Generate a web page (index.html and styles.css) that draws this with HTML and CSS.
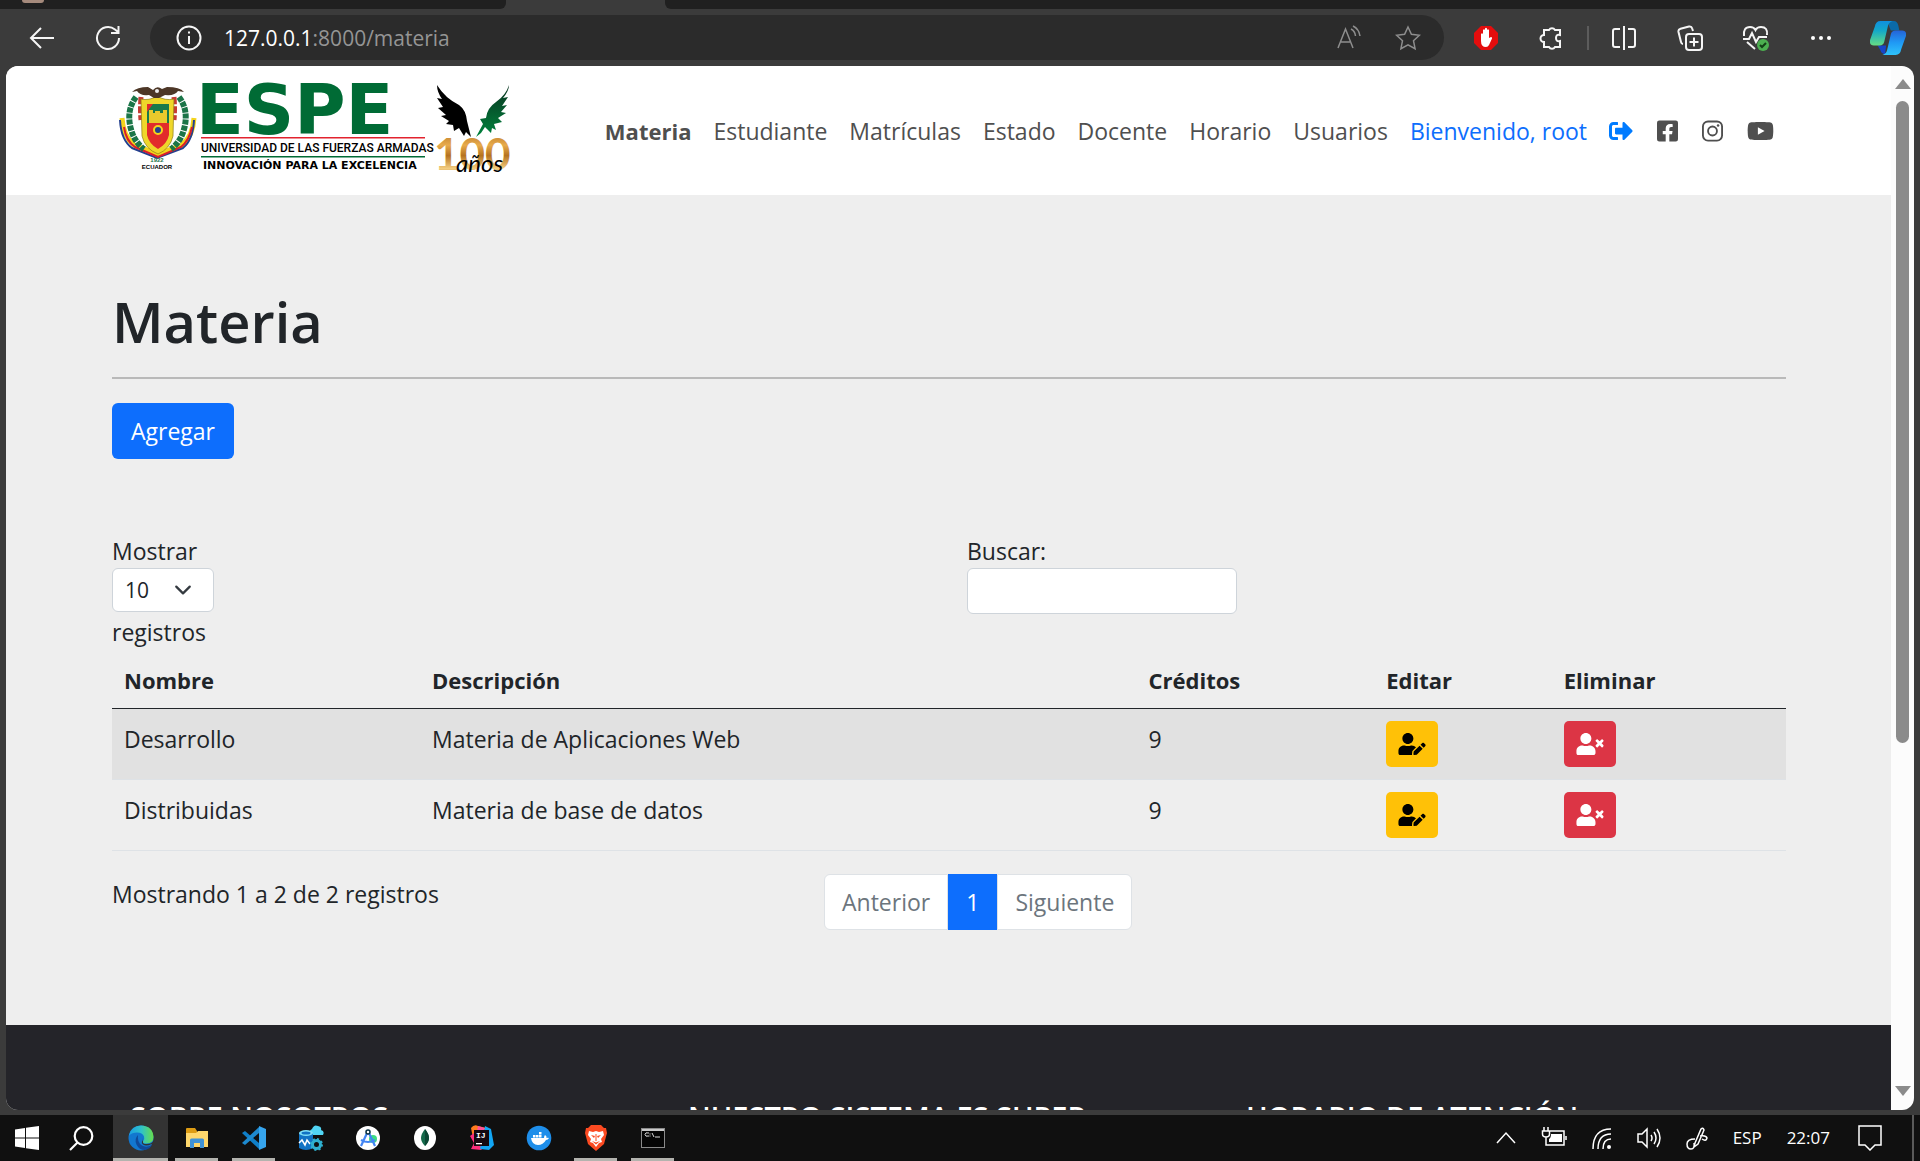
FILE: index.html
```html
<!DOCTYPE html>
<html lang="es">
<head>
<meta charset="utf-8">
<title>Materia</title>
<link rel="stylesheet" href="styles.css">
</head>
<body>
<div class="tabs">
  <div class="tab-group tab-group-left"><span class="avatar"></span></div>
  <div class="tab-active"></div>
  <div class="tab-group tab-group-right"></div>
</div>

<div class="toolbar">
  <button class="tool" aria-label="Atrás"><svg width="26" height="26" viewBox="0 0 26 26"><path d="M25 13H2M12 3 2 13l10 10"/></svg></button>
  <button class="tool" aria-label="Actualizar"><svg width="26" height="26" viewBox="0 0 26 26"><path d="M24 13a11 11 0 1 1-4-8.500l3 2.500M23.500 1v7H16"/></svg></button>
  <div class="address">
    <svg class="line" width="26" height="26" viewBox="0 0 26 26"><circle cx="13" cy="13" r="11.500"/><path d="M13 11v8M13 6.500v2"/></svg>
    <span class="url"><span class="host">127.0.0.1</span>:8000/materia</span>
    <button class="tool dim" aria-label="Leer en voz alta"><svg width="26" height="26" viewBox="0 0 26 26"><path d="M2 23 9.500 4 17 23M5 17h9M15 4q4 2 4.500 7M17 1q6 3 7 10"/></svg></button>
    <button class="tool dim" aria-label="Favoritos"><svg width="26" height="26" viewBox="0 0 26 26"><path d="m13 2 3.400 7.300 8 1-5.900 5.500 1.600 7.900L13 19.800l-7.100 3.900 1.600-7.900-5.900-5.500 8-1z"/></svg></button>
  </div>
  <button class="tool" aria-label="Bloqueador"><svg width="26" height="26" viewBox="0 0 26 26"><path class="solid" fill="#e40d0d" d="M8 1h10l7 7v10l-7 7H8l-7-7V8z"/><path class="solid" fill="#fff" d="M8 9q1-1.500 2 0V5q1-1.500 2 0V3.500q1-1.500 2 0V5q1-1.500 2 0v8l2-1q1.500 0 1 1.500L16 20q-1 2-3 2-5 0-5-6z"/></svg></button>
  <button class="tool" aria-label="Extensiones"><svg width="26" height="26" viewBox="0 0 26 26"><path d="M5 5h5a3.500 3.500 0 0 1 6 0h5v5q-4-1-4 3t4 3v6h-5a3.500 3.500 0 0 1-6 0H5v-5a3.500 3.500 0 0 1 0-7z"/></svg></button>
  <span class="divider"></span>
  <button class="tool" aria-label="Pantalla dividida"><svg width="26" height="26" viewBox="0 0 26 26"><path d="M9 4H4Q2 4 2 6v14q0 2 2 2h5M17 4h5q2 0 2 2v14q0 2-2 2h-5M13 1v24"/></svg></button>
  <button class="tool" aria-label="Colecciones"><svg width="26" height="26" viewBox="0 0 26 26"><rect x="9" y="9" width="16" height="16" rx="3"/><path d="M17 12.500v9M12.500 17h9M6 19q-1.500 0-2-2L1.500 7q-.5-2.500 2-3.200L12 1.500q2.500-.5 3.200 2l.8 2.500"/></svg></button>
  <button class="tool" aria-label="Rendimiento"><svg width="28" height="28" viewBox="0 0 28 28"><path d="M2 12Q1 3 8 3q4 0 5.500 3Q15 3 19 3q7 0 6 8M1 15h6l3-6 4 9 3-5h8M5 18l8 7"/><circle class="solid" cx="21" cy="21" r="6" fill="#4caf50"/><path class="check" d="m18 21 2 2 4-4"/></svg></button>
  <button class="tool" aria-label="Más"><svg width="26" height="26" viewBox="0 0 26 26"><g class="solid" fill="#fff"><circle cx="4" cy="13" r="2"/><circle cx="12" cy="13" r="2"/><circle cx="20" cy="13" r="2"/></g></svg></button>
  <button class="tool" aria-label="Copilot"><svg width="36" height="34" viewBox="0 0 38 36">
    <defs>
      <linearGradient id="cpa" x2="0" y2="1"><stop stop-color="#0f8fe0"/><stop offset=".4" stop-color="#14a9c8"/><stop offset="1" stop-color="#66dc83"/></linearGradient>
      <linearGradient id="cpb" x2="0" y2="1"><stop stop-color="#2563d8"/><stop offset=".5" stop-color="#1f9af5"/><stop offset="1" stop-color="#2fc3fa"/></linearGradient>
    </defs>
    <path class="solid" fill="#0b6aa8" d="M18 0h7q4 0 5 5l1 5h-9z"/><path class="solid" fill="#1745c9" d="M8 26h9l-1 9q-4 0-5-4z"/>
    <path class="solid" fill="url(#cpa)" d="M11 0h13q-4 1-5 5l-4 17q-1 4-5 4H4q-5 0-4-6L5 6q1-6 6-6z"/>
    <path class="solid" fill="url(#cpb)" d="M27 36H13q4-1 5-5l4-17q1-4 5-4h7q5 0 4 6l-5 14q-1 6-6 6z"/></svg></button>
</div>

<div class="window">
  <div class="page">
    <header class="site-header">
      <div class="container header-row">
        <a href="#" class="logo" aria-label="ESPE">
          <svg width="394" height="96" viewBox="118 84 394 96">
            <defs>
              <linearGradient id="gold" x2="0" y2="1"><stop stop-color="#a8651d"/><stop offset=".35" stop-color="#e8ab4c"/><stop offset=".55" stop-color="#b5721f"/><stop offset=".8" stop-color="#f3cd80"/><stop offset="1" stop-color="#a8651d"/></linearGradient>
              <linearGradient id="wing" x2="0" y2="1"><stop stop-color="#0a3320"/><stop offset="1" stop-color="#00843d"/></linearGradient>
            </defs>
            <g fill="none">
              <path d="M122 119q1 18 12 27l24 9 24-9q11-9 12-27" stroke="#f4d41c" stroke-width="5"/>
              <path d="M120 121q1 20 12 28l25 10 26-10q10-8 11-28" stroke="#24408f" stroke-width="2"/>
              <path d="M124 128q2 14 11 20l23 10 23-10q8-6 11-20" stroke="#d91f2b" stroke-width="2"/>
              <path d="M136 98q-9 12-6 28 3 16 14 24M179 98q9 12 6 28-3 16-14 24" stroke="#1b7548" stroke-width="6" stroke-dasharray="5 1"/>
              <path d="M141 98q-1 12 0 23M174 98q1 12 0 23" stroke="#c63a35" stroke-width="5" stroke-dasharray="7 2"/>
            </g>
            <path fill="#efd72b" stroke="#8d7c12" stroke-width=".7" d="M141 100q8 2 16-3 8 5 17 3l-1 37q-3 13-15 18-13-5-16-18z"/>
            <path fill="#18794b" d="M147 105h22v19h-22z"/>
            <path fill="#e22b2b" d="M147 105h6l-6 8zM147 124h22v12q-2 9-11 14-9-5-11-14z"/>
            <path fill="#e9c92c" d="M149 111h4v3h2v-2h5v2h3v-3h4v13h-18z"/>
            <circle cx="158" cy="131" r="4" fill="#24408f" stroke="#f4d41c" stroke-width="2"/>
            <path fill="#4d3727" d="M132 93q5-5 16-5l5 3q4-5 9-1l5-2q13 0 17 5l-6-1q-3 5-13 4l-6 3h-5l-5-3q-9 1-12-4z"/>
            <circle cx="157" cy="92" r="2" fill="#eee"/>
            <text x="157" y="163" class="crest-year">1922</text>
            <text x="157" y="170" class="crest-name">ECUADOR</text>
            <text x="196" y="135" class="espe">ESPE</text>
            <path fill="#e2232e" d="M201 138h224v1.500H201z"/>
            <text x="201" y="153" class="logo-line">UNIVERSIDAD DE LAS FUERZAS ARMADAS</text>
            <path fill="#006b35" d="M201 157h224v1.500H201z"/>
            <text x="203" y="170" class="logo-tag">INNOVACIÓN PARA LA EXCELENCIA</text>
            <path d="M437 86q8 13 22 20 7 5 8 16l4 16-5-5-2 4-5-8-5 3-1-6-7-1 3-3-8-5 5-1-8-7 5-1-6-9 5 1q-5-7-5-14z"/>
            <path fill="url(#wing)" d="M509 86q-3 10-13 17-9 6-10 16l-6 1 3 5-7 13 5-4 4-6 6 6 1-5 4 2-2-6 8-2-4-4 8-5-5-1 6-7-5 1 6-9-5 1q6-7 6-13z"/>
            <text x="434" y="171" class="hundred" fill="url(#gold)">100</text>
            <text x="456" y="173" class="years">años</text>
          </svg>
        </a>
        <nav class="nav">
          <a href="#" class="current">Materia</a>
          <a href="#">Estudiante</a>
          <a href="#">Matrículas</a>
          <a href="#">Estado</a>
          <a href="#">Docente</a>
          <a href="#">Horario</a>
          <a href="#">Usuarios</a>
          <a href="#" class="welcome">Bienvenido, root</a>
          <div class="nav-icons">
            <a href="#" class="exit" aria-label="Salir"><svg width="24" height="24" viewBox="0 0 512 512"><path d="M497 273L329 441c-15 15-41 4.500-41-17v-96H152c-13.300 0-24-10.700-24-24v-96c0-13.300 10.700-24 24-24h136V88c0-21.400 25.900-32 41-17l168 168c9.300 9.400 9.300 24.600 0 34zM192 436v-40c0-6.600-5.400-12-12-12H96c-17.700 0-32-14.300-32-32V160c0-17.700 14.300-32 32-32h84c6.600 0 12-5.400 12-12V76c0-6.600-5.400-12-12-12H96c-53 0-96 43-96 96v192c0 53 43 96 96 96h84c6.600 0 12-5.400 12-12z"/></svg></a>
            <a href="#" aria-label="Facebook"><svg width="21" height="24" viewBox="0 0 448 512"><path d="M400 32H48A48 48 0 0 0 0 80v352a48 48 0 0 0 48 48h137.250V327.690h-63V256h63v-54.640c0-62.150 37-96.480 93.670-96.480 27.140 0 55.520 4.840 55.520 4.840v61h-31.270c-30.810 0-40.420 19.120-40.420 38.730V256h68.780l-11 71.690h-57.780V480H400a48 48 0 0 0 48-48V80a48 48 0 0 0-48-48z"/></svg></a>
            <a href="#" aria-label="Instagram"><svg width="21" height="24" viewBox="0 0 448 512"><rect x="20" y="52" width="408" height="408" rx="108" fill="none" stroke="currentColor" stroke-width="40"/><circle cx="224" cy="256" r="95" fill="none" stroke="currentColor" stroke-width="40"/><circle cx="343" cy="137" r="27"/></svg></a>
            <a href="#" aria-label="YouTube"><svg width="27" height="24" viewBox="0 0 576 512"><path d="M549.655 124.083c-6.281-23.650-24.787-42.276-48.284-48.597C458.781 64 288 64 288 64S117.220 64 74.629 75.486c-23.497 6.322-42.003 24.947-48.284 48.597-11.412 42.867-11.412 132.305-11.412 132.305s0 89.438 11.412 132.305c6.281 23.650 24.787 41.500 48.284 47.821C117.220 448 288 448 288 448s170.780 0 213.371-11.486c23.497-6.321 42.003-24.171 48.284-47.821 11.412-42.867 11.412-132.305 11.412-132.305s0-89.438-11.412-132.305zm-317.510 213.508V175.185l142.739 81.205-142.739 81.201z"/></svg></a>
          </div>
        </nav>
      </div>
    </header>

    <main class="container main">
      <h1>Materia</h1>
      <hr>
      <button class="btn-add">Agregar</button>

      <div class="filters">
        <div class="field">
          <label for="length">Mostrar</label>
          <select id="length" class="length"><option>10</option></select>
          <span>registros</span>
        </div>
        <div class="field">
          <label for="search">Buscar:</label>
          <input id="search" type="search" class="search">
        </div>
      </div>

      <table>
        <colgroup><col class="c-name"><col class="c-desc"><col class="c-cred"><col class="c-edit"><col></colgroup>
        <thead>
          <tr><th>Nombre</th><th>Descripción</th><th>Créditos</th><th>Editar</th><th>Eliminar</th></tr>
        </thead>
        <tbody>
          <tr>
            <td>Desarrollo</td><td>Materia de Aplicaciones Web</td><td>9</td>
            <td><button class="act edit" aria-label="Editar"><svg width="28" height="22" viewBox="0 0 640 512"><use href="#user-edit"/></svg></button></td>
            <td><button class="act del" aria-label="Eliminar"><svg width="28" height="22" viewBox="0 0 640 512"><use href="#user-times"/></svg></button></td>
          </tr>
          <tr>
            <td>Distribuidas</td><td>Materia de base de datos</td><td>9</td>
            <td><button class="act edit" aria-label="Editar"><svg width="28" height="22" viewBox="0 0 640 512"><use href="#user-edit"/></svg></button></td>
            <td><button class="act del" aria-label="Eliminar"><svg width="28" height="22" viewBox="0 0 640 512"><use href="#user-times"/></svg></button></td>
          </tr>
        </tbody>
      </table>

      <div class="table-foot">
        <div class="info">Mostrando 1 a 2 de 2 registros</div>
        <nav class="pager">
          <button disabled>Anterior</button>
          <button class="active">1</button>
          <button disabled>Siguiente</button>
        </nav>
      </div>
    </main>

    <footer class="site-footer">
      <div class="container footer-row">
        <h2>SOBRE NOSOTROS</h2>
        <h2>NUESTRO SISTEMA ES SUPER</h2>
        <h2>HORARIO DE ATENCIÓN</h2>
      </div>
    </footer>
  </div>
  <div class="scrollbar">
    <svg width="16" height="10" viewBox="0 0 16 10"><path d="M8 0l8 10H0z"/></svg>
    <div class="track"><div class="thumb"></div></div>
    <svg width="16" height="10" viewBox="0 0 16 10"><path d="M8 10 0 0h16z"/></svg>
  </div>
</div>

<div class="taskbar">
  <button class="task start" aria-label="Inicio"><svg width="24" height="24" viewBox="0 0 24 24"><path fill="#fff" d="M0 3.500 10 2v9.500H0zM11 1.800 24 0v11.500H11zM0 12.500h10V22L0 20.500zM11 12.500h13V24l-13-1.800z"/></svg></button>
  <button class="task search-task" aria-label="Buscar"><svg width="26" height="26" viewBox="0 0 26 26" fill="none" stroke="#fff" stroke-width="2.200"><circle cx="15.500" cy="11" r="8.800"/><path d="M9.500 17.500 2 25"/></svg></button>
  <button class="task selected" aria-label="Edge"><svg width="26" height="26" viewBox="0 0 26 26">
    <defs><linearGradient id="ea"><stop stop-color="#1b9de2"/><stop offset=".5" stop-color="#2fc2c9"/><stop offset="1" stop-color="#67dd4b"/></linearGradient></defs>
    <circle cx="13" cy="13" r="12.500" fill="#1277cf"/>
    <path fill="url(#ea)" d="M1 10Q3 1 13 .5 25 1 25.500 12q0 6-7 6.500-4 0-3.500-2 2-2 1-5-1.500-4-7-4-5 0-8 3z"/>
    <path fill="#0f4a9a" d="M10 10q-4 4-1.500 9.500T17 25q5-1 7-5-6 3-10 .5-5-3-4-10.500z"/><path fill="#333" d="M14.500 13q.5 2-.5 3.500-1 3 4 4 3 0 5.500-1.500l2 1V16q-2 3-6 3-5 .5-4.500-2z"/></svg></button>
  <button class="task open" aria-label="Archivos"><svg width="24" height="22" viewBox="0 0 24 22"><path fill="#dd9c14" d="M1 2q0-1 1-1h8l2 3v5H1z"/><path fill="#fed76c" d="M1 6h10l2-2h10v16H1z"/><path fill="#3f92d6" d="M5 21v-8q0-1.500 1.500-1.500h11Q19 11.500 19 13v8h-4v-5H9v5z"/></svg></button>
  <button class="task open" aria-label="Code"><svg width="26" height="26" viewBox="0 0 26 26"><path fill="#0f7fc8" d="M1 8l3-2 14 12v6z"/><path fill="#1d8ad0" d="M1 18l3 2L18 8V2z"/><path fill="#36a5ee" d="M18 1l7 3v18l-7 3z"/></svg></button>
  <button class="task" aria-label="Azure Data"><svg width="26" height="26" viewBox="0 0 26 26"><path fill="#51d5f4" d="M13 10q-3-4 1-6 2-5 6-3 4 1 3 4 4 1 2 5z"/><path fill="#1173c4" d="M1 8h14v15q-7 4-14 0z"/><ellipse cx="8" cy="8" rx="7" ry="3" fill="#7fe0f7"/><ellipse cx="8" cy="8" rx="4.500" ry="1.500" fill="#1173c4"/><path d="m1 18 3-3 3 5 2-5 3 4" fill="none" stroke="#fff" stroke-width="1.500"/><circle cx="18.500" cy="19.500" r="4" fill="none" stroke="#2fb0cf" stroke-width="3"/><circle cx="18.500" cy="19.500" r="5.500" fill="none" stroke="#2fb0cf" stroke-width="2" stroke-dasharray="2 2.300"/></svg></button>
  <button class="task" aria-label="Android Studio"><svg width="26" height="26" viewBox="0 0 26 26"><circle cx="13" cy="13" r="12" fill="#fff"/><circle cx="18" cy="14" r="4" fill="#3ddc84"/><path d="M13 6 6 21M13 6l7 15M6 15q7 4 14 0" fill="none" stroke="#4285f4" stroke-width="2.200"/><circle cx="13" cy="7" r="2" fill="#fff" stroke="#073042" stroke-width="1.500"/></svg></button>
  <button class="task" aria-label="MongoDB"><svg width="26" height="26" viewBox="0 0 26 26"><ellipse cx="13" cy="13" rx="11" ry="12" fill="#fff"/><path fill="#13694a" d="M13 4q4 5 4 9t-4 8q-4-4-4-8t4-9z"/><path fill="#0b4734" d="M13 4q4 5 4 9t-4 8z"/></svg></button>
  <button class="task" aria-label="IntelliJ IDEA"><svg width="26" height="26" viewBox="0 0 26 26"><path fill="#fe7a1d" d="M2 3q3-4 7-2l8 2L5 18z"/><path fill="#fc2f7d" d="M1 11 12 3l6 16-6 6-10-1 3-6z"/><path fill="#12a6f4" d="M16 1l6 3 3 16-5 5-9-1z"/><path fill="#ff4f9a" d="M9 1l7 2-2 3H8z"/><rect x="5" y="5" width="15" height="16" fill="#140a10"/><text x="7" y="13" class="ij">IJ</text><path fill="#fff" d="M7 18h6v1.300H7z"/></svg></button>
  <button class="task" aria-label="Docker"><svg width="26" height="26" viewBox="0 0 26 26"><circle cx="13" cy="13" r="12.300" fill="#1e8eea"/><path fill="#fff" d="M5 13h13q0-2 1-3 2 1 1.500 3 1.500-.5 2.500 0-1 2-3 2-3 5-8 5-6 0-7-7zM7 10h2.500v2.500H7zM10 10h2.500v2.500H10zM13 10h2.500v2.500H13zM13 7h2.500v2.500H13z"/></svg></button>
  <button class="task open" aria-label="Brave"><svg width="26" height="26" viewBox="0 0 26 26"><path fill="#fb4a21" d="M8 0h10l3 3 2 0 1 5-3 11-8 7-8-7L2 8l1-5 2 0z"/><path fill="#fff" d="m6 6 4 1 3-1 3 1 4-1 1 4-3 4 1 3-3 1-3 4-3-4-3-1 1-3-3-4z"/><path fill="#fb4a21" d="m8 10 4 1-1 2zM18 10l-4 1 1 2zM12.500 9h1v7h-1zM9 16l4 1.500L17 16l-4 3.500z"/></svg></button>
  <button class="task open" aria-label="Terminal"><svg width="24" height="20" viewBox="0 0 24 20"><rect x=".5" y=".5" width="23" height="19" fill="#050505" stroke="#8a8a8a"/><path fill="#c9c9c9" d="M1 1h22v2H1z"/><path d="M8 5q-4-1-4 1.500T8 8M9 5.500v1M9 7.500v1M11 5l2 4M14 9h5" fill="none" stroke="#ddd"/></svg></button>

  <div class="tray">
    <svg width="20" height="24" viewBox="0 0 20 24"><path d="m1 17 9-10 9 10"/></svg>
    <svg width="26" height="24" viewBox="0 0 26 24"><path d="M9 5h14v14H5v-5M25 10v4M3 1v4M7 1v4M1.500 5h7v3q0 3-3.500 3t-3.500-3zM5 11v3"/><path class="fill" d="M10 8h11v8H8v-3q2-1 2-5z"/></svg>
    <svg width="20" height="24" viewBox="0 0 20 24"><path d="M1 23Q1 3 19 3M6 23Q6 8 19 8M11 23Q11 13 19 13"/><circle class="fill" cx="17" cy="21" r="2"/></svg>
    <svg width="24" height="24" viewBox="0 0 24 24"><path d="M1 8h4l5-5v18l-5-5H1zM14 9q2 3 0 6M17 6q4 6 0 12M20 3q6 9 0 18"/></svg>
    <svg width="22" height="24" viewBox="0 0 22 24"><path d="M9 17 15 3q2-2 3 1l-6 14-4 3zM9 13q-8 0-8 5t4 5 3-6M14 10q6-1 7 2-1 4-5 1"/></svg>
    <span class="lang">ESP</span>
    <span class="clock">22:07</span>
    <svg width="24" height="26" viewBox="0 0 24 26"><path d="M1 1h22v19h-6l-5 5-5-5H1z"/></svg>
  </div>
</div>

<svg class="sprite" width="0" height="0" aria-hidden="true">
  <symbol id="user-edit" viewBox="0 0 640 512"><path d="M224 256c70.700 0 128-57.300 128-128S294.700 0 224 0 96 57.300 96 128s57.300 128 128 128zm89.600 32h-16.700c-22.200 10.200-46.900 16-72.900 16s-50.600-5.800-72.900-16h-16.700C60.200 288 0 348.200 0 422.400V464c0 26.500 21.500 48 48 48h274.900c-2.400-6.800-3.400-14-2.600-21.300l6.800-60.900 1.200-11.100 7.900-7.900 77.300-77.300c-24.500-27.700-60-45.500-99.900-45.500zm45.300 145.300l-6.800 61c-1.100 10.200 7.500 18.800 17.600 17.600l60.900-6.800 137.900-137.900-71.700-71.700-137.900 137.800zM633 268.900L595.100 231c-9.300-9.300-24.500-9.300-33.800 0l-37.800 37.800-4.100 4.100 71.800 71.700 41.800-41.800c9.300-9.400 9.300-24.500 0-33.900z"/></symbol>
  <symbol id="user-times" viewBox="0 0 640 512"><path d="M589.600 240l45.600-45.600c6.300-6.300 6.300-16.500 0-22.800l-22.800-22.800c-6.300-6.300-16.500-6.300-22.800 0L544 194.400l-45.600-45.600c-6.300-6.300-16.500-6.300-22.800 0l-22.800 22.800c-6.300 6.300-6.300 16.500 0 22.800l45.600 45.600-45.600 45.600c-6.300 6.300-6.300 16.500 0 22.800l22.800 22.800c6.300 6.300 16.500 6.300 22.800 0l45.600-45.600 45.600 45.600c6.300 6.300 16.500 6.300 22.800 0l22.800-22.800c6.300-6.300 6.300-16.500 0-22.800L589.600 240zM224 256c70.700 0 128-57.300 128-128S294.700 0 224 0 96 57.300 96 128s57.300 128 128 128zm89.600 32h-16.700c-22.200 10.200-46.900 16-72.900 16s-50.600-5.800-72.900-16h-16.700C60.200 288 0 348.200 0 422.400V464c0 26.500 21.500 48 48 48h352c26.500 0 48-21.500 48-48v-41.600c0-74.200-60.200-134.400-134.400-134.400z"/></symbol>
</svg>
</body>
</html>
```
FILE: styles.css
```css
* { box-sizing: border-box; }

body {
  margin: 0;
  height: 100vh;
  display: flex;
  flex-direction: column;
  overflow: hidden;
  background: #3b3b3b;
  color: #212529;
  font-family: "Open Sans", "Noto Sans", sans-serif;
  font-size: 23px;
  line-height: 36px;
}

button, input, select { font: inherit; color: inherit; }
button { border: 0; padding: 0; background: none; }
a { color: inherit; text-decoration: none; }
svg { display: block; flex: none; }
.sprite { position: absolute; }

/* Browser chrome */
.tabs { display: flex; height: 9px; flex: none; }
.tab-group { background: #202020; overflow: hidden; }
.tab-group-left { width: 506px; padding-left: 22px; border-bottom-right-radius: 6px; }
.tab-active { width: 159px; }
.tab-group-right { flex: 1; border-bottom-left-radius: 6px; }
.avatar { display: block; width: 22px; height: 3px; border-radius: 0 0 11px 11px; background: #a58a7c; }

.toolbar {
  display: flex;
  align-items: center;
  gap: 26px;
  height: 57px;
  flex: none;
  padding: 0 12px 0 22px;
}
.tool {
  width: 40px;
  height: 40px;
  flex: none;
  display: grid;
  place-items: center;
}
.tool svg, .line { fill: none; stroke: #f5f5f5; stroke-width: 2; }
.tool .solid { stroke: none; }
.tool .check { stroke: #123f16; }
.tool.dim svg { stroke: #8e8e8e; stroke-width: 1.500; }
.address {
  flex: 1;
  display: flex;
  align-items: center;
  height: 45px;
  margin: 0 -4px;
  padding: 0 16px 0 26px;
  border-radius: 23px;
  background: #2b2b2b;
}
.url { flex: 1; margin-left: 22px; font-size: 21px; color: #959595; }
.host { color: #fff; }
.address .dim + .dim { margin-left: 19px; }
.divider { width: 2px; height: 24px; margin: 0 -11px; background: #5c5c5c; }

/* Page viewport */
.window {
  flex: 1;
  min-height: 0;
  display: flex;
  margin: 0 6px 5px;
  border-radius: 12px;
  overflow: hidden;
}
.page { flex: 1; min-width: 0; overflow: hidden; background: #eee; }
.container { padding: 0 105px 0 106px; }

.site-header { background: #fff; }
.header-row {
  display: flex;
  align-items: center;
  justify-content: space-between;
  height: 129px;
  padding-left: 112px;
  padding-right: 117px;
}
.logo svg { overflow: visible; }
.espe { font: bold 70px "DejaVu Sans", sans-serif; fill: #006b35; }
.logo-line { font: 500 12px Roboto, sans-serif; }
.logo-tag { font: bold 11px "DejaVu Sans", sans-serif; }
.crest-year { font: bold 6px "Liberation Sans", sans-serif; fill: #1b7548; text-anchor: middle; }
.crest-name { font: bold 6px "Liberation Sans", sans-serif; text-anchor: middle; }
.hundred { font: bold 44px Lato, sans-serif; }
.years { font: italic 24px Lato, sans-serif; }

.nav { display: flex; align-items: center; gap: 22px; color: #4f4f4f; }
.nav-icons { display: flex; align-items: center; gap: 24px; }
.nav svg { fill: currentColor; }
.current { font-weight: 700; }
.welcome { color: #0d6efd; }
.exit { color: #007bff; }

.main { padding-top: 90px; padding-bottom: 95px; }
h1 { margin: 0 0 20px; font-size: 56px; font-weight: 600; line-height: 72px; }
hr { margin: 0 0 24px; border: 0; border-top: 2px solid #b9b9b9; }
.btn-add {
  display: block;
  padding: 10px 19px;
  border-radius: 6px;
  background: #0d6efd;
  color: #fff;
}

.filters { display: grid; grid-template-columns: 1fr 1fr; gap: 36px; margin-top: 75px; }
.field { display: flex; flex-direction: column; align-items: flex-start; }
.field label { line-height: 34px; }
.length {
  width: 102px;
  height: 44px;
  margin-bottom: 2px;
  padding: 0 12px;
  border: 1px solid #ced4da;
  border-radius: 6px;
  appearance: none;
  font-size: 21px;
  background: #fff url("data:image/svg+xml,%3Csvg xmlns='http://www.w3.org/2000/svg' viewBox='0 0 16 16'%3E%3Cpath fill='none' stroke='%23343a40' stroke-linecap='round' stroke-linejoin='round' stroke-width='2' d='m2 5 6 6 6-6'/%3E%3C/svg%3E") no-repeat 61px center / 18px;
}
.search {
  width: 270px;
  height: 46px;
  padding: 0 12px;
  border: 1px solid #ced4da;
  border-radius: 6px;
  background: #fff;
}

table { width: 100%; table-layout: fixed; border-collapse: collapse; }
.c-name { width: 18.400%; }
.c-desc { width: 42.800%; }
.c-cred { width: 14.200%; }
.c-edit { width: 10.600%; }
th, td { padding: 12px; text-align: left; vertical-align: top; }
th { padding-bottom: 10px; font-weight: 700; border-bottom: 1px solid #212529; }
th, .current { font-size: 22px; }
td { border-bottom: 1px solid #dee2e6; }
tbody tr:nth-child(odd) { background: #e1e1e1; }
.act { display: block; padding: 12px; border-radius: 5px; }
.edit { background: #ffc107; color: #000; }
.del { background: #dc3545; color: #fff; }
.act svg { fill: currentColor; }

.table-foot { display: grid; grid-template-columns: 676fr 962fr; gap: 36px; margin-top: 23px; }
.info { padding-top: 2px; }
.pager { display: flex; justify-content: flex-start; }
.pager button {
  height: 56px;
  padding: 0 17px;
  border: 1px solid #dee2e6;
  background: #fff;
  color: #6c757d;
}
.pager button:first-child { border-radius: 6px 0 0 6px; }
.pager button:last-child { border-radius: 0 6px 6px 0; }
.pager .active { background: #0d6efd; border-color: #0d6efd; color: #fff; }

.site-footer { background: #242429; padding-top: 74px; }
.footer-row { display: grid; grid-template-columns: repeat(3, 1fr); }
h2 { margin: 0; padding-left: 18px; font-size: 29px; font-weight: 600; line-height: 36px; color: #fff; white-space: nowrap; }

.scrollbar {
  width: 23px;
  flex: none;
  display: flex;
  flex-direction: column;
  align-items: center;
  gap: 12px;
  padding: 13px 0 14px;
  background: #fcfcfc;
}
.scrollbar svg { fill: #8b8b8b; }
.track { flex: 1; }
.thumb { width: 13px; height: 66%; border-radius: 7px; background: #8b8b8b; }

/* Taskbar */
.taskbar { display: flex; height: 46px; flex: none; background: #101010; color: #fff; border-right: 1px solid #101010; }
.task {
  width: 43px;
  margin-right: 14px;
  display: grid;
  place-items: center;
  border-top: 3px solid transparent;
  border-bottom: 3px solid transparent;
}
.start { width: 54px; margin: 0; }
.search-task { width: 54px; margin: 0 5px 0 0; }
.selected { width: 55px; margin-right: 7px; background: #333; border-top-color: #333; }
.open, .selected { border-bottom-color: #b3b3ae; }
.ij { font: bold 8px "Liberation Mono", monospace; fill: #fff; }
.tray {
  flex: 1;
  display: flex;
  align-items: center;
  justify-content: flex-end;
  gap: 25px;
  margin-right: 5px;
  padding-right: 30px;
  border-right: 2px solid #5a5a5a;
  font-size: 17px;
}
.tray svg { fill: none; stroke: #fff; stroke-width: 1.500; }
.tray .fill { fill: #fff; stroke: none; }
.clock { margin-right: 3px; }
```
